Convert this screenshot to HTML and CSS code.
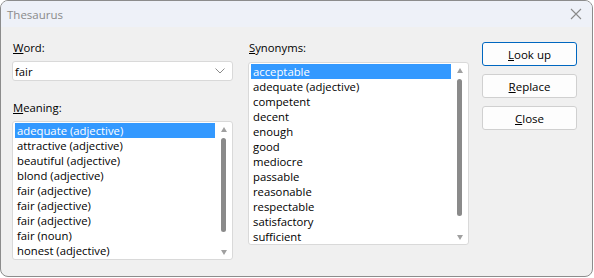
FILE: index.html
```html
<!DOCTYPE html>
<html lang="en">
<head>
  <meta charset="UTF-8" />
  <title>Thesaurus</title>
  <link rel="stylesheet" href="styles.css">
</head>
<body>
  <div class="window">
    <div class="titlebar">
      <span class="title">Thesaurus</span>
      <svg class="close-x" width="12" height="12" viewBox="0 0 12 12"><path d="M1 1 L11 11 M11 1 L1 11" stroke="#8a8a8a" stroke-width="1.1" fill="none"/></svg>
    </div>
    <div class="content">
      <div class="col col-left">
        <div class="label"><u>W</u>ord:</div>
        <div class="combo">
          <span>fair</span>
          <svg width="10" height="6" viewBox="0 0 10 6"><path d="M0.5 0.5 L5 5 L9.5 0.5" stroke="#8a8a8a" stroke-width="1" fill="none"/></svg>
        </div>
        <div class="label label-meaning"><u>M</u>eaning:</div>
        <div class="listbox list-meaning">
          <div class="items">
            <div class="item selected">adequate (adjective)</div>
            <div class="item">attractive (adjective)</div>
            <div class="item">beautiful (adjective)</div>
            <div class="item">blond (adjective)</div>
            <div class="item">fair (adjective)</div>
            <div class="item">fair (adjective)</div>
            <div class="item">fair (adjective)</div>
            <div class="item">fair (noun)</div>
            <div class="item">honest (adjective)</div>
          </div>
          <div class="scrollbar">
            <span class="arrow up"></span>
            <span class="thumb thumb-meaning"></span>
            <span class="arrow down"></span>
          </div>
        </div>
      </div>
      <div class="col col-mid">
        <div class="label label-syn"><u>S</u>ynonyms:</div>
        <div class="listbox list-syn">
          <div class="items">
            <div class="item selected">acceptable</div>
            <div class="item">adequate (adjective)</div>
            <div class="item">competent</div>
            <div class="item">decent</div>
            <div class="item">enough</div>
            <div class="item">good</div>
            <div class="item">mediocre</div>
            <div class="item">passable</div>
            <div class="item">reasonable</div>
            <div class="item">respectable</div>
            <div class="item">satisfactory</div>
            <div class="item">sufficient</div>
          </div>
          <div class="scrollbar">
            <span class="arrow up"></span>
            <span class="thumb thumb-syn"></span>
            <span class="arrow down"></span>
          </div>
        </div>
      </div>
      <div class="col col-buttons">
        <button class="btn btn-default"><u>L</u>ook up</button>
        <button class="btn"><u>R</u>eplace</button>
        <button class="btn"><u>C</u>lose</button>
      </div>
    </div>
  </div>
</body>
</html>
```

FILE: styles.css
```css
body {
  margin: 0;
  background-color: #ffffff;
  font-family: "Open Sans", "Noto Sans", sans-serif;
  font-size: 11.3px;
  color: #000;
}

.window {
  width: 591px;
  height: 275px;
  border: 1px solid #8c8c8c;
  border-radius: 8px;
  background-color: #f0f0f0;
  overflow: hidden;
  display: flex;
  flex-direction: column;
}

.titlebar {
  height: 26px;
  background-color: #eef1f8;
  display: flex;
  align-items: center;
  justify-content: space-between;
  padding: 0 10px 0 6px;
}

.title {
  color: #8a8a8a;
  font-size: 11.5px;
}

.content {
  display: flex;
  padding: 13px 0 0 11px;
}

.col {
  display: flex;
  flex-direction: column;
}

.col-left {
  width: 221px;
}

.col-mid {
  width: 221px;
  margin-left: 15px;
}

.col-buttons {
  width: 95px;
  margin-left: 13px;
  padding-top: 2px;
  gap: 8px;
}

.label {
  height: 15px;
  line-height: 15px;
  padding-left: 1px;
}

.combo {
  margin-top: 6px;
  height: 18px;
  border: 1px solid #d9d9d9;
  border-radius: 3px;
  background-color: #fff;
  display: flex;
  align-items: center;
  justify-content: space-between;
  padding: 0 7px 0 2px;
}

.label-meaning {
  margin-top: 19px;
}

.listbox {
  margin-top: 6px;
  border: 1px solid #d9d9d9;
  border-radius: 3px;
  background-color: #fff;
  display: flex;
  padding: 1px 0 0 2px;
}

.list-meaning {
  height: 136px;
}

.list-syn {
  margin-top: 7px;
  height: 180px;
}

.items {
  width: 200px;
}

.item {
  height: 15px;
  line-height: 15px;
  padding-left: 2px;
  white-space: nowrap;
}

.item.selected {
  background-color: #3399ff;
  color: #fff;
}

.scrollbar {
  flex: 1;
  display: flex;
  flex-direction: column;
  align-items: center;
  padding: 4px 0;
}

.arrow {
  width: 0;
  height: 0;
  border-left: 3.5px solid transparent;
  border-right: 3.5px solid transparent;
}

.arrow.up {
  border-bottom: 5px solid #a0a0a0;
}

.arrow.down {
  border-top: 5px solid #a0a0a0;
  margin-top: auto;
}

.thumb {
  width: 5px;
  border-radius: 3px;
  background-color: #8a8a8a;
  margin-top: 6px;
}

.thumb-meaning {
  height: 94px;
}

.thumb-syn {
  height: 137px;
}

.btn {
  height: 24px;
  border: 1px solid #d0d0d0;
  border-radius: 3px;
  background-color: #fdfdfd;
  font-family: inherit;
  font-size: 11.5px;
  color: #000;
  padding: 0;
}

.btn-default {
  border-color: #0067c0;
}
```
